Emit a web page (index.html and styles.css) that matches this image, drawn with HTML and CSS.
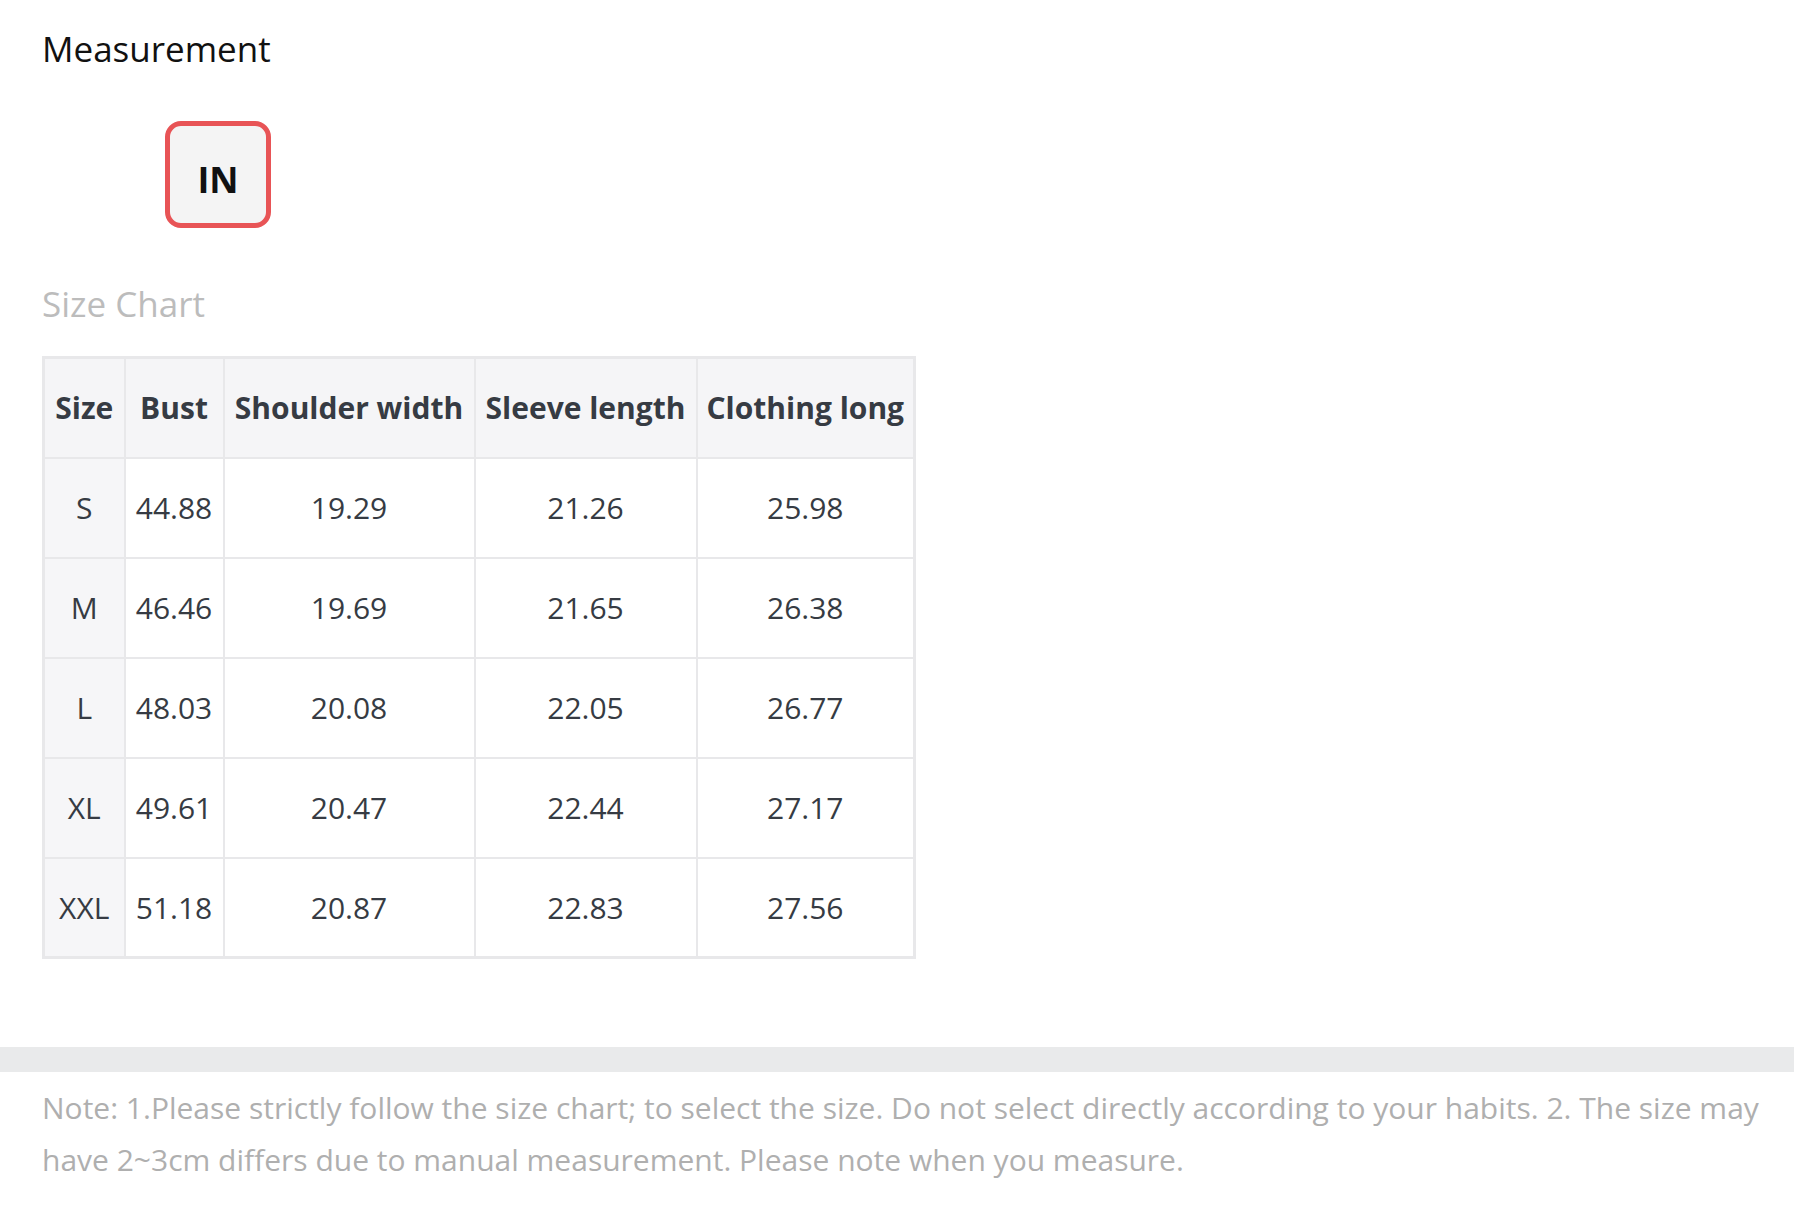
FILE: index.html
```html
<!DOCTYPE html>
<html lang="en">
<head>
<meta charset="utf-8">
<title>Measurement</title>
<link rel="stylesheet" href="styles.css">
</head>
<body>
<section class="content">
  <h2 class="title">Measurement</h2>
  <div class="units">
    <div class="unit unit-active">IN</div>
  </div>
  <h3 class="subtitle">Size Chart</h3>
  <table class="chart">
    <colgroup>
      <col class="c-size">
      <col class="c-bust">
      <col class="c-shoulder">
      <col class="c-sleeve">
      <col class="c-long">
    </colgroup>
    <thead>
      <tr><th>Size</th><th>Bust</th><th>Shoulder width</th><th>Sleeve length</th><th>Clothing long</th></tr>
    </thead>
    <tbody>
      <tr><td class="sz">S</td><td>44.88</td><td>19.29</td><td>21.26</td><td>25.98</td></tr>
      <tr><td class="sz">M</td><td>46.46</td><td>19.69</td><td>21.65</td><td>26.38</td></tr>
      <tr><td class="sz">L</td><td>48.03</td><td>20.08</td><td>22.05</td><td>26.77</td></tr>
      <tr><td class="sz">XL</td><td>49.61</td><td>20.47</td><td>22.44</td><td>27.17</td></tr>
      <tr><td class="sz">XXL</td><td>51.18</td><td>20.87</td><td>22.83</td><td>27.56</td></tr>
    </tbody>
  </table>
</section>
<div class="divider"></div>
<p class="note">Note: 1.Please strictly follow the size chart; to select the size. Do not select directly according to your habits. 2. The size may have 2~3cm differs due to manual measurement. Please note when you measure.</p>
</body>
</html>
```

FILE: styles.css
```css
html, body {
  margin: 0;
  padding: 0;
  background: #ffffff;
  font-family: "Open Sans", "Noto Sans", sans-serif;
}

.content {
  padding: 0 42px;
}

.title {
  margin: 26px 0 0;
  font-size: 35px;
  line-height: 46px;
  font-weight: 400;
  color: #111111;
}

.units {
  display: flex;
  margin-top: 49px;
  padding-left: 123px;
}

.unit {
  box-sizing: border-box;
  width: 106px;
  height: 107px;
  border: 5px solid #e85456;
  border-radius: 16px;
  background: #f4f4f4;
  display: flex;
  align-items: center;
  justify-content: center;
  padding-top: 10px;
  font-size: 36px;
  font-weight: 700;
  color: #111111;
}

.subtitle {
  margin: 53px 0 0;
  font-size: 35px;
  line-height: 46px;
  font-weight: 400;
  color: #bcbcbc;
}

.chart {
  margin-top: 29px;
  width: 871px;
  table-layout: fixed;
  border-collapse: collapse;
  border: 3px solid #e8e8ea;
  color: #363b43;
  font-size: 30px;
}

.c-size { width: 81px; }
.c-bust { width: 99px; }
.c-shoulder { width: 251px; }
.c-sleeve { width: 222px; }
.c-long { width: 218px; }

.chart th,
.chart td {
  border: 2px solid #e8e8ea;
  height: 100px;
  padding: 0;
  text-align: center;
  vertical-align: middle;
  white-space: nowrap;
  box-sizing: border-box;
}

.chart th {
  background: #f5f5f7;
  font-weight: 700;
}

.chart td {
  font-weight: 400;
}

.chart td.sz {
  background: #f6f6f8;
}

.divider {
  margin-top: 88px;
  height: 25px;
  background: #e9eaeb;
}

.note {
  margin: 10px 0 0;
  padding: 0 20px 0 42px;
  font-size: 30px;
  line-height: 52px;
  color: #afafaf;
}
```
